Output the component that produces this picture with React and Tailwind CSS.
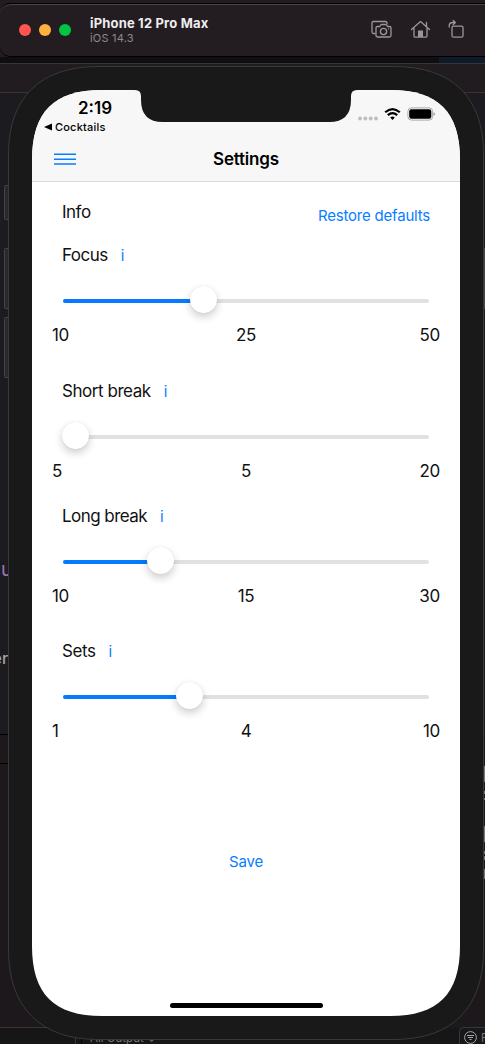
import React from "react";

function Slider({ value }) {
  return (
    <div className="relative mx-[31px] flex h-7 items-center">
      <div className="h-1 w-full overflow-hidden rounded-full bg-[#e1e1e3]">
        <div className="h-full bg-[#067aff]" style={{ width: value + 13 + "px" }} />
      </div>
      <div
        className="absolute top-[-1px] size-[27px] rounded-full bg-white shadow-[0_4px_8px_rgba(0,0,0,0.2),0_0_1px_rgba(0,0,0,0.12)]"
        style={{ left: value - 1 + "px" }}
      />
    </div>
  );
}

function Setting({ label, value, labels, labelClass = "", iconClass = "ml-[13px]", className = "" }) {
  return (
    <section className={className}>
      <div className="flex h-6 items-center pl-[30px]">
        <span className={"whitespace-nowrap text-[17px] " + labelClass}>{label}</span>
        <button className={"text-[15px] text-[#087eff] " + iconClass}>i</button>
      </div>
      <div className="mt-[19px]">
        <Slider value={value} />
      </div>
      <div className="mt-[8px] grid h-6 grid-cols-3 items-center pl-5 pr-5 text-[17px] tracking-[-0.3px]">
        <span>{labels[0]}</span>
        <span className="text-center">{labels[1]}</span>
        <span className="text-right">{labels[2]}</span>
      </div>
    </section>
  );
}

function Desktop() {
  return (
    <div className="absolute inset-0 bg-[#1b191d]">
      <svg className="size-full" viewBox="0 0 485 1044">
        <rect width="485" height="93" fill="#211c20" />
        <rect y="57" width="485" height="7" fill="#100e11" />
        <rect x="439" y="57" width="46" height="6" fill="#0e1c29" />
        <path d="M0 63.5H485M0 92.5H485" stroke="#39343a" />
        <rect y="93" width="485" height="642" fill="#1b1b20" />
        <rect y="735" width="485" height="292" fill="#1d181c" />
        <path d="M0 734.5H9M0 763.5H9" stroke="#000" />
        <rect y="1028" width="485" height="16" fill="#161617" />
        <path d="M0 1027.5H60M75.5 1030V1044" stroke="#39343a" />
        <path d="M81.5 1030V1044" stroke="#050505" />
        <rect x="459.500" y="1027.500" width="40" height="30" rx="4" fill="#18181a" stroke="#39373a" />
        <g stroke="#a5a3a5" fill="none">
          <circle cx="470.500" cy="1037.500" r="5.900" />
          <path d="M467 1035.500h7M468 1037.500h5M469.500 1039.500h2" />
        </g>
        <g fontFamily="Inter, sans-serif" fill="#777579">
          <text x="90" y="1042" fontSize="11.500">All Output ⌄</text>
          <text x="481" y="1042" fontSize="11.500">F</text>
          <text x="-7.500" y="664" fontSize="16" fontWeight="500" fill="#a5a4aa">er</text>
          <text x="1" y="576" fontSize="19" fill="#9977b5">u</text>
        </g>
        <path d="M484.500 766v16M484.500 791v3M484.500 798v2M484.500 826v16M484.500 851v3M484.500 856v4M484.500 869v10" stroke="#777" />
      </svg>
    </div>
  );
}

function TitleBar() {
  return (
    <header className="relative mt-[3px] flex h-[54px] items-center rounded-l-[10px] border-y border-black bg-[#231d21] shadow-[inset_0_1px_0_#49444a]">
      <div className="ml-[19px] flex gap-2">
        <i className="size-3 rounded-full bg-[#ff5450]" />
        <i className="size-3 rounded-full bg-[#ffb23d]" />
        <i className="size-3 rounded-full bg-[#00c443]" />
      </div>
      <div className="ml-[19px]">
        <div className="h-[15px] whitespace-nowrap text-[13px] leading-[15px] font-bold tracking-[0.17px] text-[#eeedef]">iPhone 12 Pro Max</div>
        <div className="h-[14px] text-[11px] leading-[14px] tracking-[0.2px] text-[#8d898d]">iOS 14.3</div>
      </div>
      <svg className="absolute top-[14px] left-[368px] h-7 w-[104px]" viewBox="368 18 104 28" fill="none" stroke="#9b969a" strokeWidth="1.300" strokeLinejoin="round" strokeLinecap="round">
        <path d="M375 33.500h-1.500q-1.500 0-1.500-1.500V23q0-1.500 1.500-1.500h12q1.500 0 1.500 1.500v1" />
        <path d="M377.500 26.500h2.300l1.300-2h5l1.300 2h2.100q1.500 0 1.500 1.500v7.500q0 1.500-1.500 1.500h-12q-1.500 0-1.500-1.500V28q0-1.500 1.500-1.500z" />
        <circle cx="383.500" cy="31.500" r="3.100" />
        <path d="M388.500 28.800h.1" />
        <path d="m411.500 29.500 9-8 9 8M414 28v8q0 1.200 1.200 1.200h10.600q1.200 0 1.200-1.200v-8M426.500 26v-3.500" />
        <path d="M418 37v-6.500h5v6.500z" fill="#9b969a" stroke="none" />
        <rect x="452" y="26.200" width="11" height="11" rx="1.500" />
        <path d="M449.200 27v-1q0-3.500 3.500-3.500h2.500M453.200 20.500l2.200 2-2.200 2" />
      </svg>
    </header>
  );
}

function StatusIcons() {
  return (
    <svg className="absolute top-[16px] left-[325px] h-4 w-[80px]" viewBox="357 106 80 16">
      <g fill="#bebebe">
        <circle cx="360" cy="118.500" r="1.900" />
        <circle cx="365.300" cy="118.500" r="1.900" />
        <circle cx="370.700" cy="118.500" r="1.900" />
        <circle cx="376" cy="118.500" r="1.900" />
      </g>
      <g fill="none" stroke="#000" strokeWidth="2.200">
        <path d="M385.200 112.300q7.300-6.500 14.600 0" />
        <path d="M387.800 115.200q4.700-4.100 9.400 0" />
      </g>
      <path d="M390.200 117.400q2.300-2 4.600 0l-2.300 2.600z" />
      <rect x="407.900" y="107.900" width="24.700" height="12.200" rx="3.500" fill="none" stroke="#aaa" />
      <rect x="409.200" y="109.200" width="22.100" height="9.600" rx="2.200" />
      <path d="M433.500 112.200q1.500.5 1.500 1.800t-1.500 1.800z" fill="#999" />
    </svg>
  );
}

function Screen() {
  return (
    <main className="relative flex h-[926px] w-[428px] flex-col text-[#111]">
      <svg className="absolute inset-0 size-full" viewBox="0 0 428 926">
        <defs>
          <clipPath id="screen">
            <path d="M70 0H358C406 0 428 22 428 70V856C428 904 406 926 358 926H70C22 926 0 904 0 856V70C0 22 22 0 70 0Z" />
          </clipPath>
        </defs>
        <g clipPath="url(#screen)">
          <rect width="428" height="926" fill="#fff" />
          <rect width="428" height="91" fill="#f7f7f7" />
          <rect y="91" width="428" height="1" fill="#dadada" />
          <path d="M103-1V0Q109 0 109 6V10Q109 32 131 32H297Q319 32 319 10V6Q319 0 325 0V-1Z" fill="#191919" />
        </g>
      </svg>
      <div className="relative flex h-[92px] shrink-0 flex-col text-black">
        <div className="mt-[8px] ml-[46px] h-5 text-[17px] leading-5 font-semibold tracking-[0px]">2:19</div>
        <div className="ml-[12px] flex h-[18px] items-center text-[11px] font-medium tracking-[0.2px]">
          <svg className="mr-[3px] h-2 w-2" viewBox="0 0 8 8"><path d="M0 4 8 .5v7z" /></svg>
          Cocktails
        </div>
        <div className="grid h-[46px] grid-cols-3 items-center">
          <svg className="ml-[22px] h-4 w-[22px]" viewBox="0 0 22 16" stroke="#0a7dff" strokeWidth="1.500"><path d="M0 3.300h22M0 8.200h22M0 13h22" /></svg>
          <h1 className="pt-[2px] text-center text-[17px] font-semibold tracking-[-0.2px]">Settings</h1>
        </div>
        <StatusIcons />
      </div>
      <div className="relative flex h-[62px] shrink-0 justify-between pt-[18px] pl-[30px] pr-[30px]">
        <span className="h-6 text-[17px] leading-6 tracking-[-0.5px]">Info</span>
        <button className="mt-[4px] h-6 text-[15px] leading-6 tracking-[-0.2px] whitespace-nowrap text-[#087eff]">Restore defaults</button>
      </div>
      <div className="relative">
        <Setting label="Focus" value={128} labels={["10", "25", "50"]} labelClass="tracking-[-0.5px]" />
        <Setting className="mt-[33px]" label="Short break" value={0} labels={["5", "5", "20"]} labelClass="tracking-[-0.45px]" />
        <Setting className="mt-[22px]" label="Long break" value={85} labels={["10", "15", "30"]} labelClass="tracking-[-0.55px]" />
        <Setting className="mt-[32px]" label="Sets" value={114} labels={["1", "4", "10"]} labelClass="tracking-[-0.4px]" />
      </div>
      <button className="relative mx-auto mt-auto mb-[142px] h-6 text-[15px] leading-6 tracking-[-0.2px] text-[#087eff]">Save</button>
      <div className="absolute bottom-2 left-[138px] h-[5px] w-[153px] rounded-full bg-black" />
    </main>
  );
}

function Phone() {
  return (
    <div className="relative mt-[9px] h-[974px] w-[485px] pt-[24px] pl-[32px]">
      <svg className="absolute inset-0 size-full overflow-visible" viewBox="0 66 485 974">
        <g fill="#292929" stroke="#454545">
          <rect x="4.500" y="185.500" width="10" height="34" rx="1" />
          <rect x="4.500" y="248.500" width="10" height="60" rx="1" />
          <rect x="4.500" y="317.500" width="10" height="60" rx="1" />
          <rect x="475" y="248.500" width="9.500" height="60" />
        </g>
        <path d="M98 66.500H394C453 66.500 483.500 98 483.500 154V950C483.500 1007 453 1039.500 394 1039.500H98C40 1039.500 8.500 1007 8.500 950V154C8.500 98 40 66.500 98 66.500Z" fill="#191919" stroke="#393939" />
      </svg>
      <Screen />
    </div>
  );
}

export default function App() {
  return (
    <div className="relative flex h-[1044px] w-[485px] flex-col overflow-hidden font-['Inter',sans-serif]">
      <Desktop />
      <TitleBar />
      <Phone />
    </div>
  );
}
